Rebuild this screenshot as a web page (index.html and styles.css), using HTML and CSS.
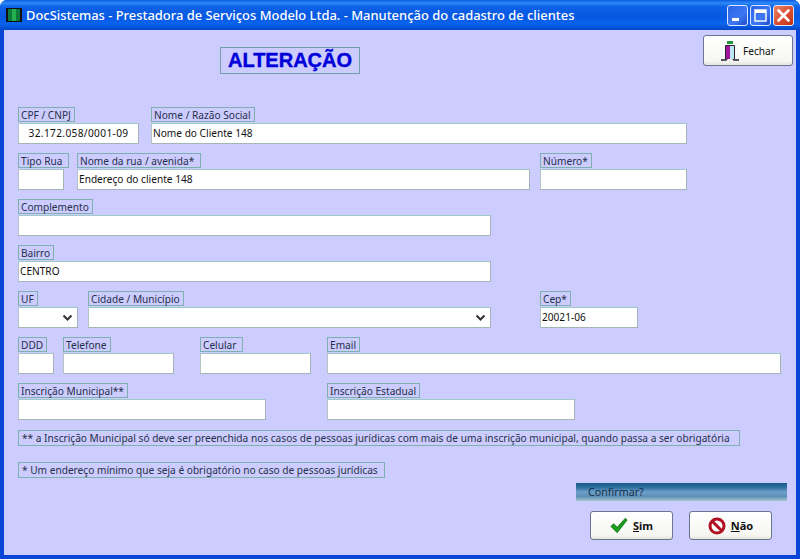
FILE: index.html
```html
<!DOCTYPE html>
<html lang="pt-BR">
<head>
<meta charset="utf-8">
<title>DocSistemas</title>
<link rel="stylesheet" href="styles.css">
</head>
<body>
<div class="window">
  <header class="titlebar">
    <svg class="app-icon" width="16" height="14" viewBox="0 0 16 14"><rect width="16" height="14" fill="#111"/><rect x="2" y="1" width="4" height="12" fill="#0c7a3c"/><rect x="6" y="1" width="4" height="12" fill="#22b04c"/><rect x="10" y="1" width="4" height="12" fill="#0c7a3c"/></svg>
    <span class="title-text">DocSistemas - Prestadora de Serviços Modelo Ltda. - Manutenção do cadastro de clientes</span>
    <div class="win-buttons">
      <span class="win-btn"><svg width="21" height="21" viewBox="0 0 21 21"><rect x="5" y="13" width="7" height="3" fill="#fff"/></svg></span>
      <span class="win-btn"><svg width="21" height="21" viewBox="0 0 21 21"><rect x="5" y="5" width="11" height="11" fill="none" stroke="#fff" stroke-width="1.4"/><rect x="5" y="5" width="11" height="3" fill="#fff"/></svg></span>
      <span class="win-btn win-close"><svg width="21" height="21" viewBox="0 0 21 21"><path d="M5.500 5.500l10 10M15.500 5.500l-10 10" stroke="#fff" stroke-width="2.600" stroke-linecap="round"/></svg></span>
    </div>
  </header>
  <main class="content">
    <div class="head-row">
      <h1 class="heading">ALTERAÇÃO</h1>
      <button class="btn btn-close-form" type="button">
        <svg width="18" height="22" viewBox="0 0 18 22"><rect x="6" y="1" width="6" height="3" fill="#1c9a3c"/><path d="M0 20h5c1 0 1-1 1-2M18 20h-5c-1 0-1-1-1-2" fill="none" stroke="#223" stroke-width="1.400"/><rect x="5" y="6" width="4" height="13" fill="#a0169c"/><rect x="9" y="6" width="4" height="13" fill="#bfe6f2"/><path d="M4.500 19V5.500h9V19" fill="none" stroke="#223"/></svg>
        <span>Fechar</span>
      </button>
    </div>

    <div class="row row-1">
      <div class="field w-cpf"><label class="lbl">CPF / CNPJ</label><input class="inp inp-center" value="32.172.058/0001-09"></div>
      <div class="field w-nome ml-12"><label class="lbl">Nome / Razão Social</label><input class="inp" value="Nome do Cliente 148"></div>
    </div>
    <div class="row">
      <div class="field w-tipo"><label class="lbl lbl-pad">Tipo Rua</label><input class="inp"></div>
      <div class="field w-rua ml-13"><label class="lbl lbl-pad">Nome da rua / avenida*</label><input class="inp" value="Endereço do cliente 148"></div>
      <div class="field w-num ml-10"><label class="lbl">Número*</label><input class="inp"></div>
    </div>
    <div class="row">
      <div class="field w-long"><label class="lbl">Complemento</label><input class="inp"></div>
    </div>
    <div class="row">
      <div class="field w-long"><label class="lbl">Bairro</label><input class="inp" value="CENTRO"></div>
    </div>
    <div class="row">
      <div class="field w-uf"><label class="lbl">UF</label><div class="inp sel"><svg width="11" height="7" viewBox="0 0 11 7"><path d="M1.500 1.500l4 4 4-4" fill="none" stroke="#333" stroke-width="2"/></svg></div></div>
      <div class="field w-cid ml-10"><label class="lbl">Cidade / Município</label><div class="inp sel"><svg width="11" height="7" viewBox="0 0 11 7"><path d="M1.500 1.500l4 4 4-4" fill="none" stroke="#333" stroke-width="2"/></svg></div></div>
      <div class="field w-cep ml-49"><label class="lbl">Cep*</label><input class="inp" value="20021-06"></div>
    </div>
    <div class="row">
      <div class="field w-ddd"><label class="lbl">DDD</label><input class="inp"></div>
      <div class="field w-tel ml-9"><label class="lbl">Telefone</label><input class="inp"></div>
      <div class="field w-tel ml-26"><label class="lbl lbl-pad">Celular</label><input class="inp"></div>
      <div class="field w-email ml-16"><label class="lbl">Email</label><input class="inp"></div>
    </div>
    <div class="row">
      <div class="field w-insc"><label class="lbl">Inscrição Municipal**</label><input class="inp"></div>
      <div class="field w-insc ml-61"><label class="lbl">Inscrição Estadual</label><input class="inp"></div>
    </div>

    <p class="note note-1">** a Inscrição Municipal só deve ser preenchida nos casos de pessoas jurídicas com mais de uma inscrição municipal, quando passa a ser obrigatória</p>
    <p class="note note-2">* Um endereço mínimo que seja é obrigatório no caso de pessoas jurídicas</p>

    <div class="confirm">
      <div class="confirm-bar">Confirmar?</div>
      <div class="confirm-buttons">
        <button class="btn btn-action" type="button">
          <svg width="18" height="17" viewBox="0 0 20 18"><path d="M1 10l3-3 4 4L17 1l2 2L8 17z" fill="#18a018" stroke="#0a5a14" stroke-width=".8"/></svg>
          <span><u>S</u>im</span>
        </button>
        <button class="btn btn-action" type="button">
          <svg width="18" height="18" viewBox="0 0 18 18"><circle cx="9" cy="9" r="7" fill="#fff" stroke="#b01020" stroke-width="3"/><path d="M4.500 4.500l9 9" stroke="#b01020" stroke-width="3"/></svg>
          <span><u>N</u>ão</span>
        </button>
      </div>
    </div>
  </main>
</div>
</body>
</html>
```

FILE: styles.css
```css
* { box-sizing: border-box; }
html, body { margin: 0; padding: 0; }
body {
  width: 800px;
  height: 559px;
  overflow: hidden;
  font-family: "Noto Sans", "Liberation Sans", sans-serif;
  font-size: 10.15px;
  color: #1a1a2a;
}
.window {
  width: 800px;
  height: 559px;
  display: flex;
  flex-direction: column;
  background: #0a45d8;
  border-radius: 7px 7px 0 0;
}
.titlebar {
  height: 30px;
  flex: none;
  display: flex;
  align-items: center;
  padding: 0 6px 0 6px;
  background: linear-gradient(180deg, #0a5ae0 0%, #2f8af5 10%, #0f62e6 22%, #0658e2 55%, #0a64ee 80%, #0446c8 100%);
  border-radius: 7px 7px 0 0;
}
.app-icon { margin-right: 4px; flex: none; }
.title-text {
  color: #fff;
  font-size: 12.93px;
  font-weight: 500;
  white-space: nowrap;
}
.win-buttons { margin-left: auto; display: flex; gap: 2px; }
.win-btn {
  width: 21px;
  height: 21px;
  border: 1px solid #dfe8ff;
  border-radius: 3px;
  background: linear-gradient(135deg, #2a62e8, #3f78f2 60%, #1d49c8);
  display: flex;
  align-items: center;
  justify-content: center;
}
.win-btn svg { flex: none; margin: -1px; }
.win-close { background: linear-gradient(135deg, #e8866a, #d9482a 60%, #b83218); }
.content {
  flex: 1;
  margin: 0 4px 4px;
  padding: 0 14px;
  background: #ccccff;
  position: relative;
}
.head-row { height: 77px; position: relative; }
.heading {
  position: absolute;
  left: 202px;
  top: 17px;
  margin: 0;
  width: 140px;
  height: 27px;
  line-height: 25px;
  text-align: center;
  font-size: 20px;
  font-weight: 700;
  font-family: "Liberation Sans", sans-serif;
  color: #0000d8;
  border: 1px solid #6fa0a8;
  -webkit-text-stroke: 0.4px #0000d8;
}
.btn {
  font-family: inherit;
  background: linear-gradient(180deg, #fff, #f6f6f2 85%, #e6e4dc);
  border: 1px solid #6a7590;
  border-radius: 3px;
  display: flex;
  align-items: center;
  justify-content: center;
  padding: 0;
  color: #111;
}
.btn-close-form {
  position: absolute;
  right: -11px;
  top: 5px;
  width: 90px;
  height: 31px;
  gap: 4px;
  font-size: 10.15px;
}
.row { display: flex; align-items: flex-start; margin-top: 9px; }
.row-1 { margin-top: 0; }
.field { display: flex; flex-direction: column; align-items: flex-start; flex: none; }
.lbl {
  display: block;
  height: 15px;
  line-height: 14px;
  padding: 0 3px 0 2px;
  border: 1px solid #7fb0b0;
  white-space: nowrap;
  margin-bottom: 1px;
  color: #26304a;
}
.lbl-pad { padding-right: 6px; }
.inp {
  display: block;
  width: 100%;
  height: 21px;
  padding: 0 1px 1px;
  border: 1px solid #a5b5b5;
  border-top-color: #9fc8c8;
  border-left-color: #b4c4c4;
  background: #fff;
  font-family: inherit;
  font-size: 10.15px;
  color: #111;
  border-radius: 0;
  outline: none;
}
.inp-center { text-align: center; letter-spacing: 0.35px; }
.sel { display: flex; align-items: center; justify-content: flex-end; padding-right: 4px; }
.w-cpf { width: 121px; }
.w-nome { width: 536px; }
.w-tipo { width: 46px; }
.w-rua { width: 453px; }
.w-num { width: 147px; }
.w-long { width: 473px; }
.w-uf { width: 60px; }
.w-cid { width: 403px; }
.w-cep { width: 98px; }
.w-ddd { width: 36px; }
.w-tel { width: 111px; }
.w-email { width: 454px; }
.w-insc { width: 248px; }
.ml-9 { margin-left: 9px; }
.ml-10 { margin-left: 10px; }
.ml-12 { margin-left: 12px; }
.ml-13 { margin-left: 13px; }
.ml-16 { margin-left: 16px; }
.ml-26 { margin-left: 26px; }
.ml-49 { margin-left: 49px; }
.ml-61 { margin-left: 61px; }
.note {
  margin: 0;
  border: 1px solid #7fb0b0;
  height: 16px;
  line-height: 14px;
  padding: 0 3px;
  white-space: nowrap;
  color: #26304a;
}
.note-1 { width: 722px; margin-top: 10px; }
.note-2 { width: 367px; margin-top: 16px; }
.confirm {
  position: absolute;
  left: 572px;
  top: 453px;
  width: 211px;
}
.confirm-bar {
  height: 18px;
  line-height: 18px;
  padding-left: 12px;
  font-size: 10.7px;
  color: #15304a;
  background: linear-gradient(180deg, #1a5a8a 0%, #2f6fa0 25%, #6ea0c8 50%, #5d8fb8 75%, #a8c8cc 100%);
}
.confirm-buttons { display: flex; gap: 16px; margin: 10px 0 0 14px; }
.btn-action {
  width: 83px;
  height: 29px;
  gap: 5px;
  font-weight: 700;
  font-size: 11px;
}
```
